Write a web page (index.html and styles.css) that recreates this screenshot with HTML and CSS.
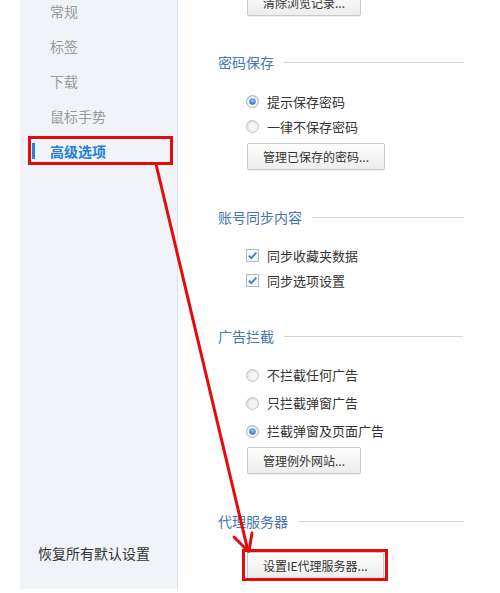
FILE: index.html
```html
<!DOCTYPE html>
<html lang="zh-CN">
<head>
<meta charset="utf-8">
<title>高级选项</title>
<link rel="stylesheet" href="styles.css">
</head>
<body>
<div class="page">
  <aside class="sidebar">
    <ul class="nav">
      <li class="nav-item">常规</li>
      <li class="nav-item">标签</li>
      <li class="nav-item">下载</li>
      <li class="nav-item">鼠标手势</li>
      <li class="nav-item active">高级选项</li>
    </ul>
    <div class="reset">恢复所有默认设置</div>
  </aside>

  <main class="content">
    <button class="btn btn-first">清除浏览记录...</button>

    <section class="section">
      <h2 class="section-title">密码保存</h2>
      <div class="opts opts-25">
        <label class="opt">
          <svg class="ico" width="13" height="13" viewBox="0 0 13 13"><defs><radialGradient id="rb1" cx="50%" cy="35%" r="60%"><stop offset="0" stop-color="#9cc8f4"/><stop offset="1" stop-color="#2f74c8"/></radialGradient><linearGradient id="rg1" x1="0" y1="0" x2="0" y2="1"><stop offset="0" stop-color="#dedede"/><stop offset="1" stop-color="#fbfbfb"/></linearGradient></defs><circle cx="6.5" cy="6.5" r="6" fill="url(#rg1)" stroke="#a9b3bd"/><circle cx="6.5" cy="6.5" r="4.2" fill="#fff"/><circle cx="6.5" cy="6.5" r="3.3" fill="url(#rb1)"/></svg>
          <span>提示保存密码</span>
        </label>
        <label class="opt">
          <svg class="ico" width="13" height="13" viewBox="0 0 13 13"><defs><linearGradient id="rg2" x1="0" y1="0" x2="1" y2="1"><stop offset="0" stop-color="#d9d9d9"/><stop offset="1" stop-color="#fcfcfc"/></linearGradient></defs><circle cx="6.5" cy="6.5" r="6" fill="url(#rg2)" stroke="#c4c4c4"/><circle cx="6.5" cy="6.5" r="3.8" fill="#f4f4f4"/></svg>
          <span>一律不保存密码</span>
        </label>
      </div>
      <button class="btn btn-after-25">管理已保存的密码...</button>
    </section>

    <section class="section">
      <h2 class="section-title">账号同步内容</h2>
      <div class="opts opts-25 opts-check">
        <label class="opt">
          <svg class="ico" width="13" height="13" viewBox="0 0 13 13"><rect x="0.5" y="0.5" width="12" height="12" fill="#f7f9fb" stroke="#a9b9c9"/><path d="M2.8 6.6 L5.3 9.1 L10.3 3.6" fill="none" stroke="#3d7fc4" stroke-width="1.8"/></svg>
          <span>同步收藏夹数据</span>
        </label>
        <label class="opt">
          <svg class="ico" width="13" height="13" viewBox="0 0 13 13"><rect x="0.5" y="0.5" width="12" height="12" fill="#f7f9fb" stroke="#a9b9c9"/><path d="M2.8 6.6 L5.3 9.1 L10.3 3.6" fill="none" stroke="#3d7fc4" stroke-width="1.8"/></svg>
          <span>同步选项设置</span>
        </label>
      </div>
    </section>

    <section class="section section-ad">
      <h2 class="section-title">广告拦截</h2>
      <div class="opts opts-28">
        <label class="opt">
          <svg class="ico" width="13" height="13" viewBox="0 0 13 13"><defs><linearGradient id="rg3" x1="0" y1="0" x2="1" y2="1"><stop offset="0" stop-color="#d9d9d9"/><stop offset="1" stop-color="#fcfcfc"/></linearGradient></defs><circle cx="6.5" cy="6.5" r="6" fill="url(#rg3)" stroke="#c4c4c4"/><circle cx="6.5" cy="6.5" r="3.8" fill="#f4f4f4"/></svg>
          <span>不拦截任何广告</span>
        </label>
        <label class="opt">
          <svg class="ico" width="13" height="13" viewBox="0 0 13 13"><defs><linearGradient id="rg4" x1="0" y1="0" x2="1" y2="1"><stop offset="0" stop-color="#d9d9d9"/><stop offset="1" stop-color="#fcfcfc"/></linearGradient></defs><circle cx="6.5" cy="6.5" r="6" fill="url(#rg4)" stroke="#c4c4c4"/><circle cx="6.5" cy="6.5" r="3.8" fill="#f4f4f4"/></svg>
          <span>只拦截弹窗广告</span>
        </label>
        <label class="opt">
          <svg class="ico" width="13" height="13" viewBox="0 0 13 13"><defs><radialGradient id="rb5" cx="50%" cy="35%" r="60%"><stop offset="0" stop-color="#9cc8f4"/><stop offset="1" stop-color="#2f74c8"/></radialGradient><linearGradient id="rg5" x1="0" y1="0" x2="0" y2="1"><stop offset="0" stop-color="#dedede"/><stop offset="1" stop-color="#fbfbfb"/></linearGradient></defs><circle cx="6.5" cy="6.5" r="6" fill="url(#rg5)" stroke="#a9b3bd"/><circle cx="6.5" cy="6.5" r="4.2" fill="#fff"/><circle cx="6.5" cy="6.5" r="3.3" fill="url(#rb5)"/></svg>
          <span>拦截弹窗及页面广告</span>
        </label>
      </div>
      <button class="btn btn-after-28">管理例外网站...</button>
    </section>

    <section class="section section-proxy">
      <h2 class="section-title">代理服务器</h2>
      <button class="btn btn-proxy">设置IE代理服务器...</button>
    </section>
  </main>

  <div class="mark mark-nav"></div>
  <div class="mark mark-proxy"></div>
  <svg class="arrow" width="500" height="593" viewBox="0 0 500 593">
    <g fill="none" stroke="#e30b0b" stroke-width="3" stroke-linecap="round">
      <path d="M156 164 L248 551"/>
      <path d="M234 537 L248 551"/>
      <path d="M252 533 L249 551"/>
    </g>
  </svg>
</div>
</body>
</html>
```

FILE: styles.css
```css
* { box-sizing: border-box; }

html, body {
  margin: 0;
  padding: 0;
  background: #ffffff;
}

body {
  font-family: "Noto Sans CJK SC", "Noto Sans", "Liberation Sans", sans-serif;
  color: #333333;
  overflow: hidden;
}

.page {
  position: relative;
  width: 500px;
  height: 593px;
  display: flex;
  align-items: flex-start;
  padding-left: 20px;
  overflow: hidden;
}

/* ---------- sidebar ---------- */
.sidebar {
  flex: 0 0 158px;
  height: 589px;
  background: #f0f4f9;
  border-right: 1px solid #d5e1ee;
  display: flex;
  flex-direction: column;
  justify-content: space-between;
  padding-bottom: 26px;
}

.nav {
  list-style: none;
  margin: -7px 0 0 0;
  padding: 0;
}

.nav-item {
  height: 35px;
  display: flex;
  align-items: center;
  padding-left: 12px;
  font-size: 14px;
  line-height: 20px;
  color: #9a9a9a;
}

.nav-item::before {
  content: "";
  width: 3px;
  height: 16px;
  margin-right: 15px;
  background: transparent;
}

.nav-item.active {
  color: #1f7fd9;
  font-weight: bold;
}

.nav-item.active::before {
  background: #1f86e0;
}

.reset {
  padding-left: 18px;
  font-size: 14px;
  line-height: 20px;
  color: #333333;
}

/* ---------- content ---------- */
.content {
  flex: 1;
  display: flex;
  flex-direction: column;
  align-items: flex-start;
  padding: 0 37px 0 40px;
}

.section {
  align-self: stretch;
  display: flex;
  flex-direction: column;
  align-items: flex-start;
}

.section-title {
  align-self: stretch;
  display: flex;
  align-items: center;
  gap: 10px;
  margin: 36px 0 0 0;
  height: 20px;
  font-size: 14px;
  line-height: 20px;
  font-weight: normal;
  color: #4677b2;
}

.section-title::after {
  content: "";
  flex: 1;
  height: 1px;
  background: #cdd5de;
}

.section:nth-of-type(2) .section-title { margin-top: 37px; }
.section-ad .section-title { margin-top: 33px; }
.section-proxy .section-title { margin-top: 37px; }

.opts {
  display: flex;
  flex-direction: column;
  padding-left: 28px;
  margin-top: 17px;
}

.opts-check { margin-top: 16px; }
.section-ad .opts { margin-top: 15px; }

.opt {
  display: flex;
  align-items: center;
  gap: 8px;
  font-size: 13px;
  line-height: 18px;
  color: #333333;
}

.opts-25 .opt { height: 25px; }
.opts-28 .opt { height: 28px; }

.ico { flex: 0 0 13px; display: block; }

.btn {
  margin-left: 29px;
  height: 27px;
  padding: 0 15px;
  font-family: inherit;
  font-size: 12px;
  line-height: 25px;
  color: #333333;
  background: linear-gradient(#fdfdfd, #ededed);
  border: 1px solid #c9c9c9;
  border-radius: 2px;
  box-shadow: 0 1px 0 rgba(0, 0, 0, 0.06);
  white-space: nowrap;
}

.btn-first { margin-top: -11px; }
.btn-after-25 { margin-top: 4px; }
.btn-after-28 { margin-top: 2px; }
.btn-proxy { margin-top: 21px; }

/* ---------- annotations ---------- */
.mark {
  position: absolute;
  border: 3px solid #e30b0b;
}

.mark-nav {
  left: 28px;
  top: 136px;
  width: 145px;
  height: 29px;
}

.mark-proxy {
  left: 242px;
  top: 549px;
  width: 146px;
  height: 32px;
}

.arrow {
  position: absolute;
  left: 0;
  top: 0;
  pointer-events: none;
}
```
